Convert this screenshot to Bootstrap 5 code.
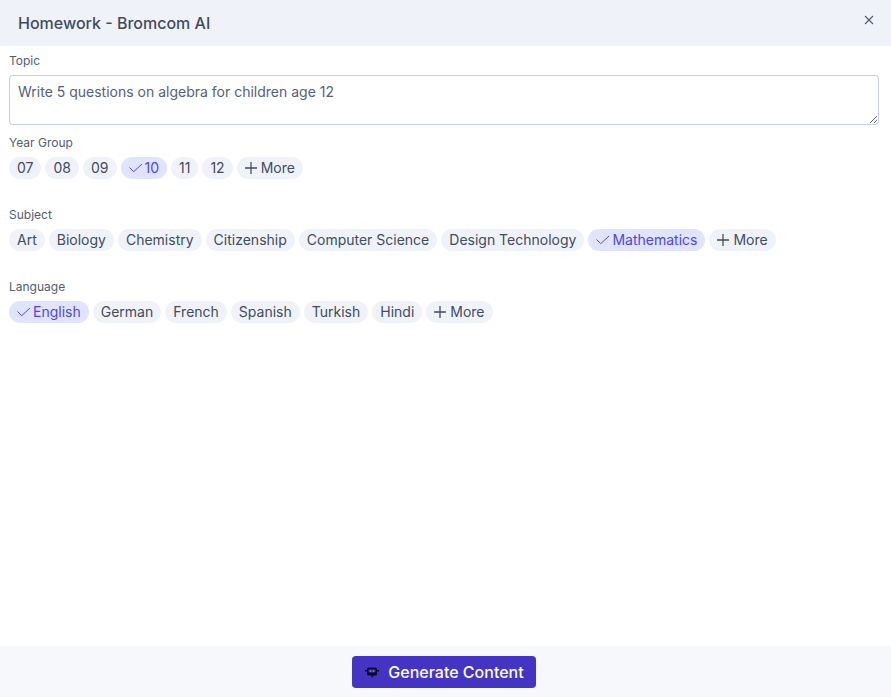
<!DOCTYPE html>
<html lang="en">
<head>
<meta charset="utf-8">
<title>Homework - Bromcom AI</title>
<link href="https://cdn.jsdelivr.net/npm/bootstrap@5.3.0/dist/css/bootstrap.min.css" rel="stylesheet">
<style>
html,body{height:100%;}
body{font-family:Inter,"Liberation Sans",sans-serif;background:#fff;color:#414c5e;}
.shell{height:697px;}
.head-bar{height:46px;background:#eff3f9;padding:0 16px 0 18px;}
.head-title{font-size:16px;font-weight:500;line-height:24px;color:#414c5e;margin:0;}
.shut{background:none;border:0;padding:0;width:12px;height:12px;margin-top:-7px;line-height:0;color:#4f5b6d;}
.form-area{padding:7px 12px 0 9px;}
.field-label{font-size:12px;line-height:16px;color:#525d6e;margin:0 0 6px;display:block;}
.topic-box{height:50px;font-size:14px;line-height:20px;color:#566173;border:1px solid #c5d2de;border-radius:4px;padding:6px 8px;margin-bottom:10px;font-family:inherit;}
.chip-row{gap:4px;margin-bottom:28px;}
.pick{font-size:14px;line-height:22px;height:22px;padding:0 8px;border-radius:11px;background:#eff3f9;color:#414c5e;border:0;white-space:nowrap;display:inline-flex;align-items:center;font-family:inherit;}
.pick.chosen{background:#e0e4ff;color:#4f46e5;}
.pick svg{flex:none;margin-right:4px;}
.pick.chosen svg{margin-right:2px;}
.foot-bar{height:51px;background:#f6f8fb;padding-right:3px;}
.make-btn{background:#4434c4;border:0;border-radius:4px;color:#fff;font-size:16px;font-weight:500;height:32px;padding:0 12px 0 13px;line-height:24px;font-family:inherit;}
.make-btn svg{margin-right:7px;}
</style>
</head>
<body>
<div class="shell d-flex flex-column">
  <div class="head-bar d-flex align-items-center justify-content-between">
    <h1 class="head-title">Homework - Bromcom AI</h1>
    <button class="shut" type="button" aria-label="Close">
      <svg width="12" height="12" viewBox="0 0 12 12" fill="none" stroke="currentColor" stroke-width="1.1"><path d="M2 2l8 8M10 2l-8 8"/></svg>
    </button>
  </div>
  <div class="form-area flex-grow-1">
    <label class="field-label" for="topic">Topic</label>
    <textarea id="topic" class="topic-box form-control">Write 5 questions on algebra for children age 12</textarea>

    <span class="field-label">Year Group</span>
    <div class="chip-row d-flex flex-wrap">
      <button class="pick" type="button">07</button>
      <button class="pick" type="button">08</button>
      <button class="pick" type="button">09</button>
      <button class="pick chosen" type="button"><svg width="14" height="14" viewBox="0 0 14 14" fill="none" stroke="currentColor" stroke-width="1"><path d="M.5 6.5l4.2 4.2L13 3"/></svg>10</button>
      <button class="pick" type="button">11</button>
      <button class="pick" type="button">12</button>
      <button class="pick" type="button"><svg width="12" height="12" viewBox="0 0 12 12" fill="none" stroke="currentColor" stroke-width="1.3"><path d="M6 0v12M0 6h12"/></svg>More</button>
    </div>

    <span class="field-label">Subject</span>
    <div class="chip-row d-flex flex-wrap">
      <button class="pick" type="button">Art</button>
      <button class="pick" type="button">Biology</button>
      <button class="pick" type="button">Chemistry</button>
      <button class="pick" type="button">Citizenship</button>
      <button class="pick" type="button">Computer Science</button>
      <button class="pick" type="button">Design Technology</button>
      <button class="pick chosen" type="button"><svg width="14" height="14" viewBox="0 0 14 14" fill="none" stroke="currentColor" stroke-width="1"><path d="M.5 6.5l4.2 4.2L13 3"/></svg>Mathematics</button>
      <button class="pick" type="button"><svg width="12" height="12" viewBox="0 0 12 12" fill="none" stroke="currentColor" stroke-width="1.3"><path d="M6 0v12M0 6h12"/></svg>More</button>
    </div>

    <span class="field-label">Language</span>
    <div class="chip-row d-flex flex-wrap">
      <button class="pick chosen" type="button"><svg width="14" height="14" viewBox="0 0 14 14" fill="none" stroke="currentColor" stroke-width="1"><path d="M.5 6.5l4.2 4.2L13 3"/></svg>English</button>
      <button class="pick" type="button">German</button>
      <button class="pick" type="button">French</button>
      <button class="pick" type="button">Spanish</button>
      <button class="pick" type="button">Turkish</button>
      <button class="pick" type="button">Hindi</button>
      <button class="pick" type="button"><svg width="12" height="12" viewBox="0 0 12 12" fill="none" stroke="currentColor" stroke-width="1.3"><path d="M6 0v12M0 6h12"/></svg>More</button>
    </div>
  </div>
  <div class="foot-bar d-flex align-items-center justify-content-center">
    <button class="make-btn d-inline-flex align-items-center" type="button">
      <svg width="16" height="16" viewBox="0 0 16 16"><path fill="#0b0b2a" d="M3.500 3.500h7a1.500 1.500 0 0 1 1.500 1.500v1H14v1.500h-2V10a1.500 1.500 0 0 1-1.500 1.500H9L6.500 14V11.500h-3A1.500 1.500 0 0 1 2 10V7.500H0V6h2V5a1.500 1.500 0 0 1 1.500-1.500z"/><rect x="3.500" y="5.500" width="7" height="3" rx=".8" fill="#3a2fa8"/><circle cx="5.500" cy="7" r=".8" fill="#9d96e8"/><circle cx="8.500" cy="7" r=".8" fill="#9d96e8"/></svg>Generate Content
    </button>
  </div>
</div>
<script src="https://cdn.jsdelivr.net/npm/bootstrap@5.3.0/dist/js/bootstrap.bundle.min.js"></script>
</body>
</html>
